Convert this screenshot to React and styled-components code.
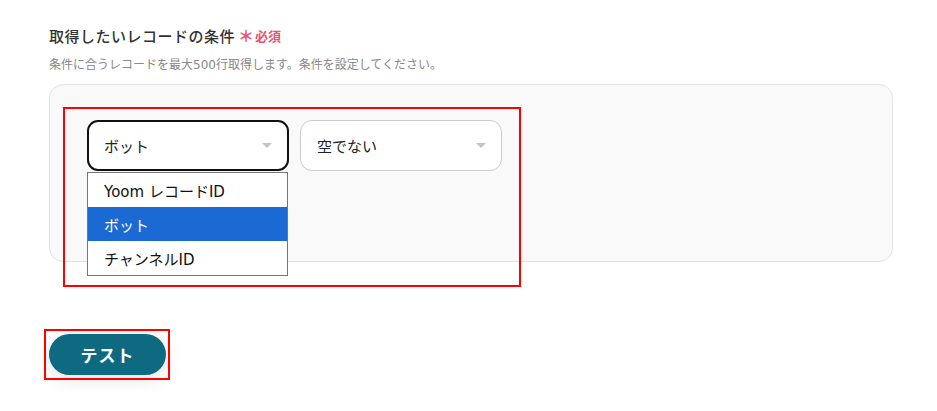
import React from "react";
import styled, { createGlobalStyle } from "styled-components";

const Global = createGlobalStyle`
  html, body { margin: 0; padding: 0; background: #fff; }
  body { font-family: "DejaVu Sans", "Noto Sans CJK JP", sans-serif; color: #222; }
`;

const Page = styled.div`
  width: 937px;
  height: 411px;
  box-sizing: border-box;
  padding: 24px 44px 0 49px;
  position: relative;
`;

const TitleRow = styled.div`
  display: flex;
  align-items: center;
  height: 22px;
`;

const Title = styled.span`
  font-family: "Noto Sans CJK JP", sans-serif;
  font-size: 15px;
  font-weight: 500;
  color: #333;
  letter-spacing: 0.5px;
`;

const Required = styled.span`
  margin-left: 3px;
  font-family: "Noto Sans CJK JP", sans-serif;
  font-size: 13px;
  font-weight: 700;
  color: #f0506e;
  display: flex;
  align-items: center;
  gap: 1px;
`;

const Star = styled.span`
  font-size: 16px;
  line-height: 1;
`;

const Hint = styled.p`
  margin: 11px 0 0;
  font-size: 12px;
  line-height: 16px;
  color: #888;
`;

const Panel = styled.div`
  margin-top: 11px;
  width: 844px;
  height: 178px;
  box-sizing: border-box;
  background: #f9f9f9;
  border: 1px solid #e3e3e3;
  border-radius: 14px;
  padding: 35px 37px;
`;

const Row = styled.div`
  display: flex;
  gap: 11px;
`;

const SelectWrap = styled.div`
  position: relative;
`;

const Select = styled.div`
  width: 202px;
  height: 51px;
  box-sizing: border-box;
  border: ${(p) => (p.$active ? "2px solid #111" : "1px solid #ccc")};
  border-radius: ${(p) => (p.$active ? 11 : 12)}px;
  background: #fff;
  display: flex;
  align-items: center;
  justify-content: space-between;
  padding: 0 15px 0 ${(p) => (p.$active ? 15 : 16)}px;
  font-size: 15px;
  color: #222;
`;

const Caret = styled.span`
  width: 0;
  height: 0;
  border-left: 5px solid transparent;
  border-right: 5px solid transparent;
  border-top: 5px solid #c4c4c4;
`;

const Menu = styled.ul`
  position: absolute;
  left: 0;
  top: 52px;
  width: 201px;
  margin: 0;
  padding: 0;
  list-style: none;
  background: #fff;
  border: 1px solid #767676;
  box-sizing: border-box;
  z-index: 2;
`;

const Option = styled.li`
  height: 34px;
  display: flex;
  align-items: center;
  padding-left: 16px;
  font-size: 15px;
  color: ${(p) => (p.$selected ? "#fff" : "#111")};
  background: ${(p) => (p.$selected ? "#1b69d3" : "#fff")};
`;

const ButtonArea = styled.div`
  margin-top: 72px;
`;

const TestButton = styled.button`
  width: 117px;
  height: 41px;
  border: none;
  border-radius: 21px;
  background: #0d6a80;
  color: #fff;
  font-family: "Noto Sans CJK JP", sans-serif;
  font-size: 17px;
  font-weight: 700;
  letter-spacing: 1px;
  box-shadow: 0 4px 18px rgba(0, 0, 0, 0.12);
  cursor: pointer;
`;

const Highlight = styled.div`
  position: absolute;
  left: ${(p) => p.$x}px;
  top: ${(p) => p.$y}px;
  width: ${(p) => p.$w}px;
  height: ${(p) => p.$h}px;
  box-sizing: border-box;
  border: 2px solid #f00;
  pointer-events: none;
  z-index: 5;
`;

export default function App() {
  return (
    <>
      <Global />
      <Page>
        <TitleRow>
          <Title>取得したいレコードの条件</Title>
          <Required>
            <Star>＊</Star>必須
          </Required>
        </TitleRow>
        <Hint>条件に合うレコードを最大500行取得します。条件を設定してください。</Hint>
        <Panel>
          <Row>
            <SelectWrap>
              <Select $active>
                ボット
                <Caret />
              </Select>
              <Menu>
                <Option>Yoom レコードID</Option>
                <Option $selected>ボット</Option>
                <Option>チャンネルID</Option>
              </Menu>
            </SelectWrap>
            <SelectWrap>
              <Select>
                空でない
                <Caret />
              </Select>
            </SelectWrap>
          </Row>
        </Panel>
        <ButtonArea>
          <TestButton>テスト</TestButton>
        </ButtonArea>
        <Highlight $x={63} $y={107} $w={458} $h={180} />
        <Highlight $x={44} $y={329} $w={126} $h={51} />
      </Page>
    </>
  );
}
